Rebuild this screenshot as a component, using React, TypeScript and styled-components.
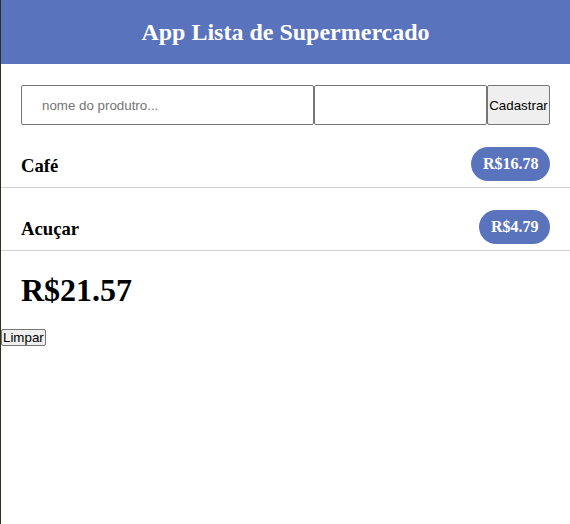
import React from "react";
import styled, { createGlobalStyle } from "styled-components";

const Global = createGlobalStyle`
  html, body { margin: 0; padding: 0; background: #fff; }
  body {
    border-left: 1px solid #2d2f25;
    min-height: 524px;
    box-sizing: border-box;
    font-family: "Liberation Serif", "Times New Roman", serif;
  }
`;

const Header = styled.header`
  height: 64px;
  background: #5a73bd;
  display: flex;
  align-items: center;
  justify-content: center;
`;

const Title = styled.h2`
  margin: 0;
  font-size: 24px;
  font-weight: bold;
  color: #fff;
`;

const Form = styled.form`
  display: flex;
  margin: 21px 20px 0 20px;
  height: 40px;
`;

const Input = styled.input<{ $w: number }>`
  box-sizing: border-box;
  width: ${(p) => p.$w}px;
  height: 40px;
  border: 1px solid #767676;
  border-radius: 2px;
  padding: 0 20px;
  font-family: "Liberation Sans", Arial, sans-serif;
  font-size: 13.33px;
  color: #000;
  outline: none;
  &::placeholder { color: #757575; }
`;

const Button = styled.button<{ $h?: number; $w?: number }>`
  box-sizing: border-box;
  padding: 0 1px;
  border: 1px solid #767676;
  border-radius: 2px;
  background: #efefef;
  font-family: "Liberation Sans", Arial, sans-serif;
  font-size: 13.33px;
  color: #000;
  height: ${(p) => (p.$h ? `${p.$h}px` : "auto")};
  width: ${(p) => (p.$w ? `${p.$w}px` : "auto")};
  line-height: 15px;
  cursor: pointer;
`;

const List = styled.ul`
  list-style: none;
  margin: 0;
  padding: 0;
`;

const Row = styled.li`
  display: flex;
  align-items: center;
  justify-content: space-between;
  padding: 22px 20px 6px 20px;
  border-bottom: 1px solid #d0d0d0;
`;

const Name = styled.h3`
  margin: 4px 0 0 0;
  font-size: 18.72px;
  font-weight: bold;
  color: #000;
`;

const Badge = styled.span`
  display: inline-flex;
  align-items: center;
  height: 34px;
  padding: 0 11.5px;
  border-radius: 17px;
  background: #5a73bd;
  color: #fff;
  font-size: 16px;
  font-weight: bold;
`;

const Total = styled.h1`
  margin: 21.44px 20px 18.44px 20px;
  font-size: 32px;
  font-weight: bold;
  color: #000;
`;

const items = [
  { name: "Café", price: "R$16.78" },
  { name: "Acuçar", price: "R$4.79" },
];

export default function App() {
  return (
    <>
      <Global />
      <Header>
        <Title>App Lista de Supermercado</Title>
      </Header>
      <Form onSubmit={(e) => e.preventDefault()}>
        <Input $w={293} placeholder="nome do produtro..." />
        <Input $w={173} />
        <Button type="submit" $h={40} $w={63}>Cadastrar</Button>
      </Form>
      <List>
        {items.map((it) => (
          <Row key={it.name}>
            <Name>{it.name}</Name>
            <Badge>{it.price}</Badge>
          </Row>
        ))}
      </List>
      <Total>R$21.57</Total>
      <Button type="button">Limpar</Button>
    </>
  );
}
